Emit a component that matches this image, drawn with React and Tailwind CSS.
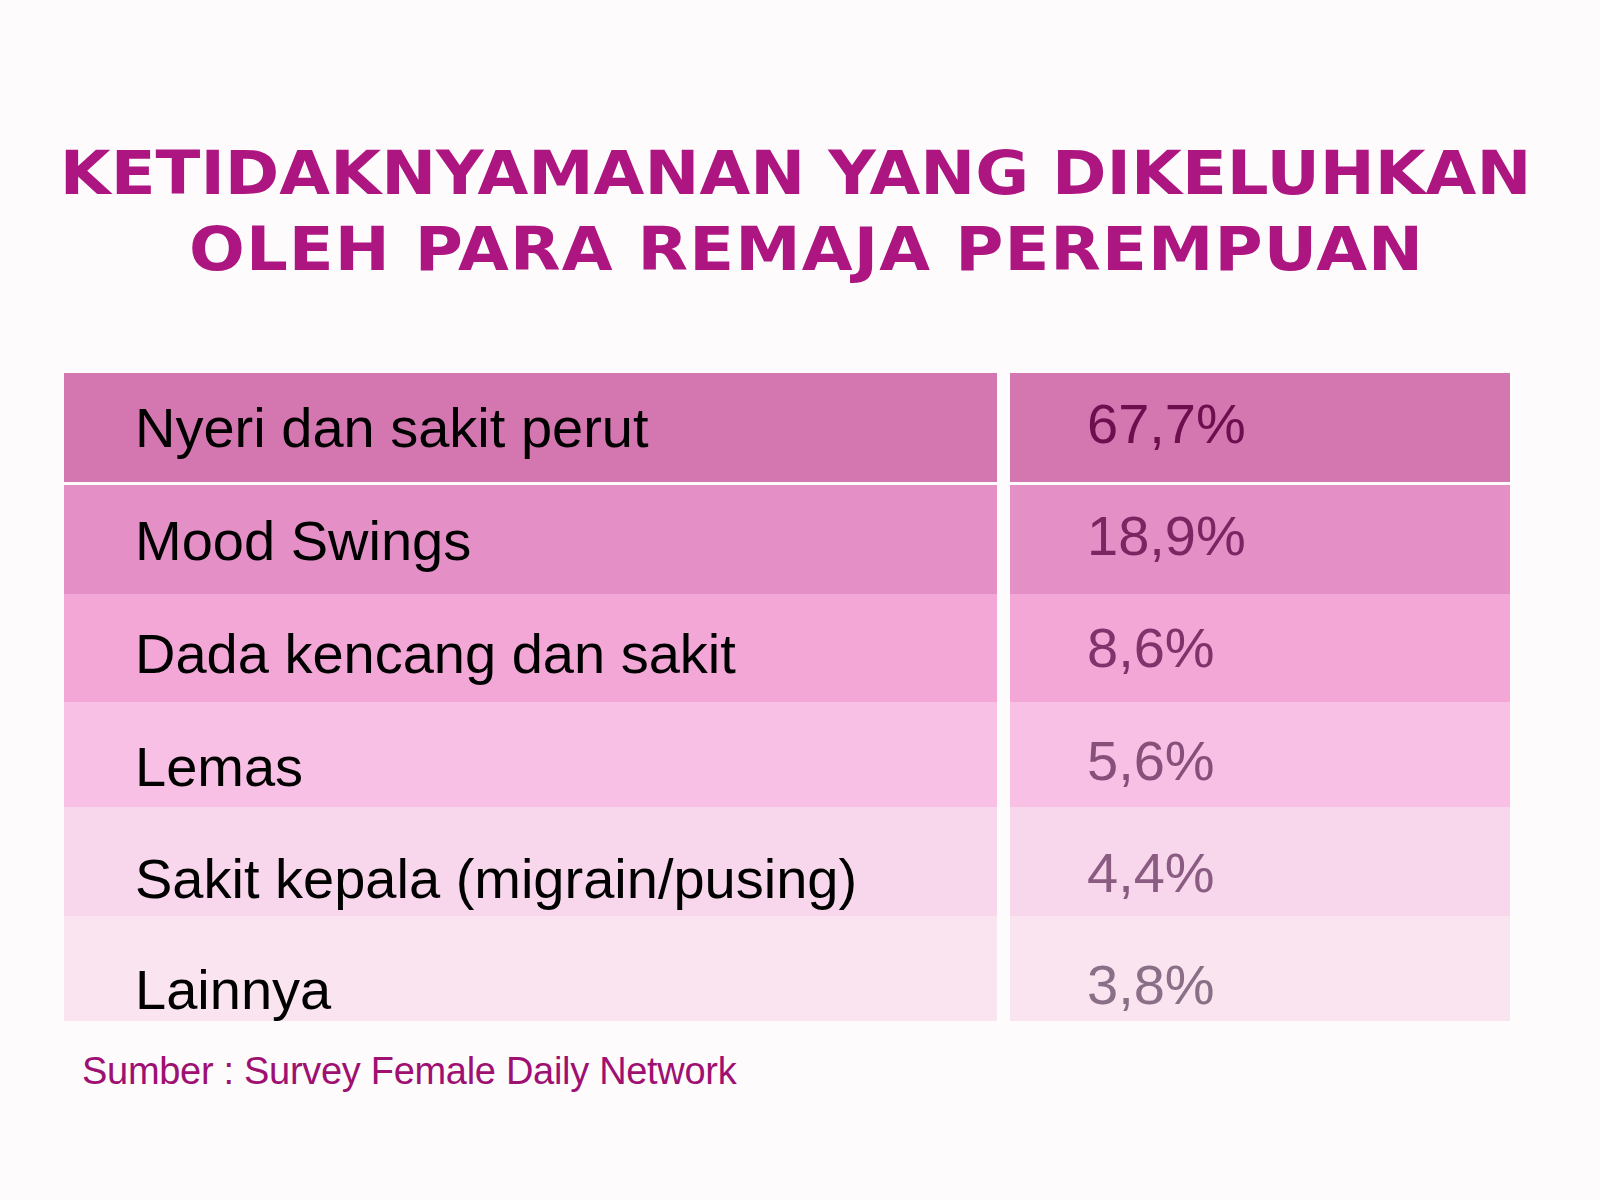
export default function App() {
  const rows = [
    { label: "Nyeri dan sakit perut", value: "67,7%", bg: "bg-[#d477b1]", vc: "text-[#6c0f4f]", h: "h-[109px]", lp: "pt-[27px]", rp: "pt-[23px]" },
    { label: "Mood Swings", value: "18,9%", bg: "bg-[#e490c7]", vc: "text-[#7b2562]", h: "h-[109px]", lp: "pt-[28px]", rp: "pt-[23px]" },
    { label: "Dada kencang dan sakit", value: "8,6%", bg: "bg-[#f2a7d7]", vc: "text-[#80326a]", h: "h-[108px]", lp: "pt-[32px]", rp: "pt-[26px]" },
    { label: "Lemas", value: "5,6%", bg: "bg-[#f8c0e4]", vc: "text-[#86507a]", h: "h-[105px]", lp: "pt-[37px]", rp: "pt-[31px]" },
    { label: "Sakit kepala (migrain/pusing)", value: "4,4%", bg: "bg-[#f8d6ec]", vc: "text-[#8a5c82]", h: "h-[109px]", lp: "pt-[44px]", rp: "pt-[38px]" },
    { label: "Lainnya", value: "3,8%", bg: "bg-[#f9e4f0]", vc: "text-[#8a6f86]", h: "h-[105px]", lp: "pt-[46px]", rp: "pt-[41px]" },
  ];
  return (
    <div className="w-[1600px] h-[1200px] bg-[#fdfbfc] overflow-hidden">
      <h1 className="pt-[135px] text-center text-[60px] leading-[76px] font-bold text-[#ad1580] font-['DejaVu_Sans',sans-serif]">
        <div className="scale-x-[1.095] pr-[8px]">KETIDAKNYAMANAN YANG DIKELUHKAN</div>
        <div className="scale-x-[1.095] tracking-[1px] pl-[12px]">OLEH PARA REMAJA PEREMPUAN</div>
      </h1>
      <div className="mt-[86px] ml-[64px] flex flex-col w-[1446px] font-['Liberation_Sans',Arial,sans-serif]">
        {rows.map((r, i) => (
          <div key={i} className={`flex gap-[13px] ${r.h} ${i === 0 ? "mb-[3px]" : ""}`}>
            <div className={`w-[933px] ${r.bg} pl-[71px] ${r.lp} text-[56px] leading-none text-black`}>
              {r.label}
            </div>
            <div className={`w-[500px] ${r.bg} pl-[77px] ${r.rp} text-[56px] leading-none ${r.vc}`}>
              {r.value}
            </div>
          </div>
        ))}
      </div>
      <div className="mt-[31px] ml-[82px] text-[38px] leading-none tracking-[-0.3px] text-[#9e1072] font-['Liberation_Sans',Arial,sans-serif]">
        Sumber : Survey Female Daily Network
      </div>
    </div>
  );
}
